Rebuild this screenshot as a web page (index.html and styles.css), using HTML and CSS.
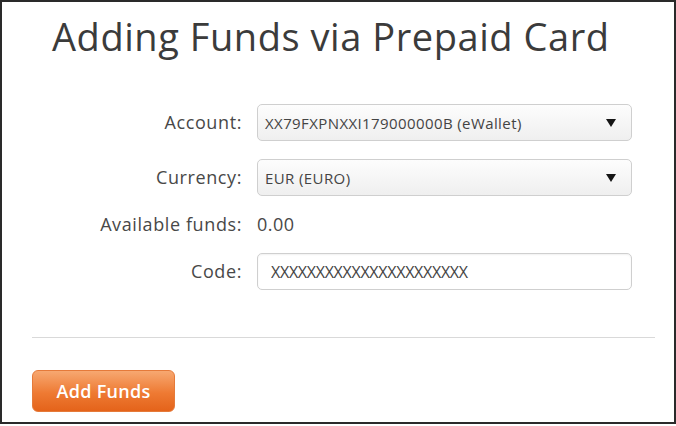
FILE: index.html
```html
<!DOCTYPE html>
<html lang="en">
<head>
    <meta charset="UTF-8">
    <title>Adding Funds via Prepaid Card</title>
    <link rel="stylesheet" href="styles.css">
</head>
<body>
<div class="frame">
    <h1>Adding Funds via Prepaid Card</h1>
    <form class="funds-form">
        <label for="account">Account:</label>
        <div class="select-box" id="account">
            <span>XX79FXPNXXI179000000B (eWallet)</span>
            <span class="arrow"></span>
        </div>

        <label for="currency">Currency:</label>
        <div class="select-box" id="currency">
            <span>EUR (EURO)</span>
            <span class="arrow"></span>
        </div>

        <label>Available funds:</label>
        <div class="value">0.00</div>

        <label for="code">Code:</label>
        <input type="text" id="code" value="XXXXXXXXXXXXXXXXXXXXXX">
    </form>
    <hr class="divider">
    <button type="button" class="btn-add">Add Funds</button>
</div>
</body>
</html>
```

FILE: styles.css
```css
body {
    margin: 0;
    background: #fff;
    font-family: 'Open Sans', sans-serif;
    color: #444;
}
.frame {
    box-sizing: border-box;
    width: 676px;
    height: 424px;
    border: 2px solid #2a2a2a;
    padding: 0 18px 0 30px;
}
h1 {
    margin: 8px 0 0 20px;
    font-size: 38px;
    font-weight: 400;
    line-height: 52px;
    color: #3b3b3b;
    letter-spacing: 0.55px;
}
.funds-form {
    display: grid;
    grid-template-columns: 210px 375px;
    column-gap: 15px;
    row-gap: 18px;
    align-items: center;
    margin-top: 42px;
}
.funds-form label {
    text-align: right;
    font-size: 18px;
    line-height: 21px;
    letter-spacing: 0.6px;
    color: #484848;
}
.select-box {
    box-sizing: border-box;
    height: 37px;
    display: flex;
    align-items: center;
    justify-content: space-between;
    padding: 0 15px 0 7px;
    border: 1px solid #cfcfcf;
    border-radius: 5px;
    background: linear-gradient(#fdfdfd, #efefef);
    font-size: 15px;
    letter-spacing: 0.4px;
    color: #444;
}
.arrow {
    width: 0;
    height: 0;
    border-left: 5px solid transparent;
    border-right: 5px solid transparent;
    border-top: 8px solid #151515;
}
.value {
    line-height: 21px;
    font-size: 18px;
    letter-spacing: 0.5px;
    color: #484848;
}
#code {
    box-sizing: border-box;
    height: 37px;
    width: 100%;
    padding: 0 13px;
    border: 1px solid #cfcfcf;
    border-radius: 5px;
    background: #fff;
    box-shadow: inset 0 1px 2px rgba(0, 0, 0, 0.06);
    font-family: 'Open Sans', sans-serif;
    font-size: 16px;
    letter-spacing: -0.3px;
    color: #444;
}
.divider {
    border: none;
    border-top: 1px solid #d9d9d9;
    margin: 47px 0 0 0;
    width: 623px;
}
.btn-add {
    margin-top: 32px;
    width: 143px;
    height: 42px;
    border: 1px solid #e57a3a;
    border-radius: 6px;
    background: linear-gradient(#f7a871, #ee7a33 55%, #e4631a);
    color: #fff;
    font-family: 'Open Sans', sans-serif;
    font-size: 18px;
    font-weight: 600;
    letter-spacing: 0.3px;
    cursor: pointer;
}
```
